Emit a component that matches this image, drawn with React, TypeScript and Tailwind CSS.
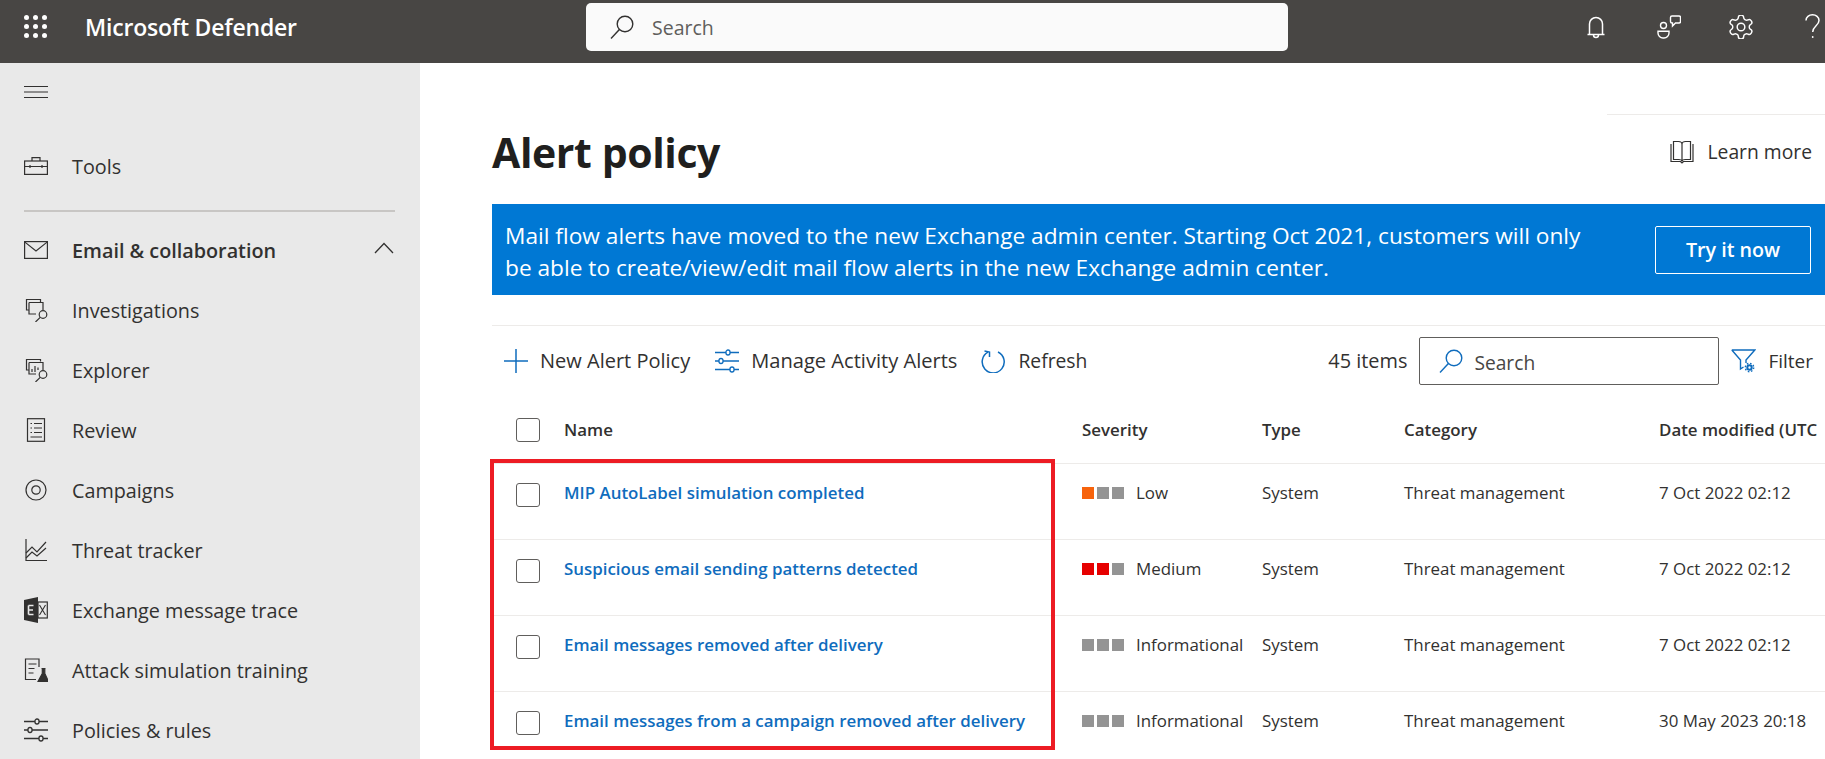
import React from "react";

const S = ({ w = 24, h = 24, vb = "0 0 24 24", c = "#323130", sw = 1.2, children }: { w?: number; h?: number; vb?: string; c?: string; sw?: number; children: React.ReactNode }) => (
  <svg width={w} height={h} viewBox={vb} fill="none" stroke={c} strokeWidth={sw} className="shrink-0 block">
    {children}
  </svg>
);

const Mag = ({ c, sw = 1.4 }: { c: string; sw?: number }) => (
  <S c={c} sw={sw}>
    <circle cx="15" cy="9" r="7.8" />
    <path d="M9.4 14.6 1 23.4" />
  </S>
);

const Sliders = ({ c }: { c: string }) => (
  <S c={c} sw={1.3}>
    <path d="M0 3.5h11M15 3.5h9M0 12h4M8 12h16M0 20.5h15M19 20.5h5" />
    <rect x="11" y="1" width="4" height="5" rx="2" />
    <rect x="4" y="9.5" width="4" height="5" rx="2" />
    <rect x="15" y="18" width="4" height="5" rx="2" />
  </S>
);

const nav: { label: string; icon: React.ReactNode; bold?: boolean }[] = [
  {
    label: "Investigations",
    icon: (
      <S>
        <path d="M16.5 4V1.5H2.5V12H5" />
        <path d="M5 4.5H19V12M5 4.5V16H12" />
        <circle cx="19" cy="16.5" r="3.8" />
        <path d="M16.2 19.3 11.5 24" />
      </S>
    ),
  },
  {
    label: "Explorer",
    icon: (
      <S>
        <path d="M16.5 3.5V1.5H2.5V12H5" />
        <path d="M5 4.5H19V12M5 4.5V16H12" />
        <path d="M8 14V11M11 14V8M14 12V9.5" />
        <circle cx="19" cy="16.5" r="3.8" />
        <path d="M16.2 19.3 11.5 24" />
      </S>
    ),
  },
  {
    label: "Review",
    icon: (
      <S>
        <rect x="3.5" y="0.7" width="17" height="22.6" />
        <path d="M6.5 5.5h1.5M10 5.5h8M6.5 10h1.5M10 10h8M6.5 14.5h1.5M10 14.5h8M6.5 19h11.5" />
      </S>
    ),
  },
  {
    label: "Campaigns",
    icon: (
      <S>
        <circle cx="12" cy="12" r="10" />
        <circle cx="12" cy="12" r="4.2" />
      </S>
    ),
  },
  {
    label: "Threat tracker",
    icon: (
      <S>
        <path d="M2 1v21.5h21" />
        <path d="M2 15l6-6 5 5 9-10" />
        <path d="M2 20l6-6 5 4 9-8" />
      </S>
    ),
  },
  {
    label: "Exchange message trace",
    icon: (
      <svg width="24" height="26" viewBox="0 0 24 26" className="shrink-0 block">
        <path d="M0 3 14 0v26L0 23z" fill="#323130" />
        <path d="M4.5 8.5h5M4.5 13h4.5M4.5 17.5h5M4.5 8.5v9" stroke="#e9e9e9" strokeWidth="1.6" fill="none" />
        <rect x="14" y="5" width="9.3" height="16" fill="none" stroke="#323130" strokeWidth="1.2" />
        <path d="M15.5 8l6 10M21.5 8l-6 10" stroke="#323130" strokeWidth="1.1" fill="none" />
      </svg>
    ),
  },
  {
    label: "Attack simulation training",
    icon: (
      <S>
        <path d="M12 21.5H1.5V1H15v8" />
        <path d="M4.5 6h8M4.5 10.5h6M4.5 15h5" />
        <path d="M17.5 10.5h4M18.3 10.5v5L14 23.5h10.5l-3.7-8v-5z" fill="#323130" />
      </S>
    ),
  },
  { label: "Policies & rules", icon: <Sliders c="#323130" /> },
];

const sq: Record<string, string[]> = {
  Low: ["#f7630c", "#949494", "#949494"],
  Medium: ["#e60000", "#e60000", "#949494"],
  Informational: ["#949494", "#949494", "#949494"],
};

const rows = [
  ["MIP AutoLabel simulation completed", "Low", "7 Oct 2022 02:12"],
  ["Suspicious email sending patterns detected", "Medium", "7 Oct 2022 02:12"],
  ["Email messages removed after delivery", "Informational", "7 Oct 2022 02:12"],
  ["Email messages from a campaign removed after delivery", "Informational", "30 May 2023 20:18"],
];

const Box = () => <div className="w-[24px] h-[24px] border border-[#605e5c] rounded-[3px] bg-white" />;

export default function App() {
  return (
    <div className="w-[1825px] h-[759px] overflow-hidden flex flex-col bg-white text-[#323130] font-['Open_Sans','Noto_Sans',sans-serif]">
      <header className="h-[63px] pb-[10px] shrink-0 bg-[#484644] flex items-center text-white">
        <div className="ml-[24px] w-[23px]">
          <svg width="23" height="23" viewBox="0 0 23 23" fill="white" className="block">
            {[2.5, 11.5, 20.5].flatMap((y) =>
              [2.5, 11.5, 20.5].map((x) => <circle key={`${x}-${y}`} cx={x} cy={y} r="2.5" />)
            )}
          </svg>
        </div>
        <div className="ml-[38px] w-[211px] mt-[2px] text-[23px] font-semibold tracking-[-0.2px] whitespace-nowrap">Microsoft Defender</div>
        <div className="ml-[290px] w-[702px] h-[48px] bg-[#fafafa] rounded-[5px] flex items-center text-[#605e5c]">
          <div className="ml-[24px]">
            <Mag c="#323130" />
          </div>
          <span className="ml-[18px] mt-[3px] text-[19.5px]">Search</span>
        </div>
        <div className="ml-[299px]">
          <svg width="18" height="24" viewBox="0 0 18 24" fill="none" stroke="white" strokeWidth="1.5" className="block">
            <path d="M.5 19.5h17M2.5 19.5V9a6.5 6.5 0 0 1 13 0v10.5M6.5 20a2.5 2.5 0 0 0 5 0" />
          </svg>
        </div>
        <div className="ml-[52px]">
          <svg width="24" height="24" viewBox="0 0 24 24" fill="none" stroke="white" strokeWidth="1.4" className="block">
            <circle cx="6.5" cy="10.5" r="3" />
            <path d="M1 16.2h11v1.8a5 5 0 0 1-5 5H6a5 5 0 0 1-5-5z" />
            <path d="M15 1h7a1.5 1.5 0 0 1 1.5 1.5v4A1.5 1.5 0 0 1 22 8h-3.5L15.5 11V8H15a1.5 1.5 0 0 1-1.5-1.5v-4A1.5 1.5 0 0 1 15 1z" />
          </svg>
        </div>
        <div className="ml-[48px]">
          <svg width="24" height="24" viewBox="2 2 20 20" fill="none" stroke="white" strokeWidth="1.2" className="block">
            <path d="M12.22 2h-.44a2 2 0 0 0-2 2v.18a2 2 0 0 1-1 1.73l-.43.25a2 2 0 0 1-2 0l-.15-.08a2 2 0 0 0-2.73.73l-.22.38a2 2 0 0 0 .73 2.73l.15.1a2 2 0 0 1 1 1.72v.51a2 2 0 0 1-1 1.74l-.15.09a2 2 0 0 0-.73 2.73l.22.38a2 2 0 0 0 2.73.73l.15-.08a2 2 0 0 1 2 0l.43.25a2 2 0 0 1 1 1.73V20a2 2 0 0 0 2 2h.44a2 2 0 0 0 2-2v-.18a2 2 0 0 1 1-1.73l.43-.25a2 2 0 0 1 2 0l.15.08a2 2 0 0 0 2.73-.73l.22-.39a2 2 0 0 0-.73-2.73l-.15-.08a2 2 0 0 1-1-1.74v-.5a2 2 0 0 1 1-1.74l.15-.09a2 2 0 0 0 .73-2.73l-.22-.38a2 2 0 0 0-2.73-.73l-.15.08a2 2 0 0 1-2 0l-.43-.25a2 2 0 0 1-1-1.73V4a2 2 0 0 0-2-2z" />
            <circle cx="12" cy="12" r="3.2" />
          </svg>
        </div>
        <div className="ml-[52px]">
          <svg width="15" height="25" viewBox="0 0 15 25" fill="none" stroke="white" strokeWidth="1.5" className="block">
            <path d="M1 6.5C1 3 4 .8 7.5.8S14 3.2 14 6.5c0 5-6.3 5.5-6.3 11.5" />
            <circle cx="7.7" cy="23" r="0.9" fill="white" stroke="none" />
          </svg>
        </div>
      </header>
      <div className="flex-1 flex min-h-0">
        <aside className="w-[420px] shrink-0 bg-[#e9e9e9] flex flex-col text-[19.8px] overflow-hidden">
          <div className="h-[58px] shrink-0 flex items-center pl-[24px]">
            <svg width="24" height="12" viewBox="0 0 24 12" stroke="#323130" strokeWidth="1" className="block">
              <path d="M0 .5h24M0 6h24M0 11.5h24" />
            </svg>
          </div>
          <div className="h-[60px] mt-[15px] shrink-0 flex items-center pl-[24px] gap-[24px]">
            <S h={18} vb="0 0 24 18">
              <rect x="0.6" y="4" width="22.8" height="13.4" />
              <path d="M8 4V.7h8V4M.6 9.5h22.8M6 8v3M18 8v3" />
            </S>
            <span className="mt-[2px]">Tools</span>
          </div>
          <div className="mt-[14px] mx-[24px] w-[371px] h-[2px] shrink-0 bg-[#c8c6c4]" />
          <div className="h-[60px] mt-[8px] shrink-0 flex items-center pl-[24px] gap-[24px] font-semibold">
            <S h={18} vb="0 0 24 18">
              <rect x="0.6" y="0.6" width="22.8" height="16.8" />
              <path d="M.6.9 12 10 23.4.9" />
            </S>
            <span className="mt-[2px]">Email &amp; collaboration</span>
            <div className="ml-auto mr-[26px] mb-[4px]">
              <S w={20} h={12} vb="0 0 20 12" sw={1.3}>
                <path d="M1 11 10 1.5 19 11" />
              </S>
            </div>
          </div>
          <div className="flex flex-col">
            {nav.map((n) => (
              <div key={n.label} className="h-[60px] shrink-0 flex items-center pl-[24px] gap-[24px]">
                {n.icon}
                <span className="mt-[2px]">{n.label}</span>
              </div>
            ))}
          </div>
        </aside>
        <main className="flex-1 min-w-0 flex flex-col pl-[72px] relative overflow-hidden">
          <div className="mt-[51px] self-end w-[218px] h-px shrink-0 bg-[#edebe9]" />
          <div className="mt-[9px] mb-[24px] h-[56px] shrink-0 flex items-center justify-between pr-[13px]">
            <h1 className="text-[41px] font-bold text-[#201f1e] tracking-[-0.4px] leading-[56px]">Alert policy</h1>
            <div className="flex items-center gap-[14px] text-[19.3px]">
              <S>
                <path d="M1 4v17.5h9.5L12 23l1.5-1.5H23V4" />
                <path d="M3.5 19.5V1.5h5c2 0 3.5 1 3.5 3 0-2 1.5-3 3.5-3h5v18h-5c-2 0-3.5.7-3.5 2 0-1.3-1.5-2-3.5-2zM12 4.5v17" />
              </S>
              <span className="mt-[1px]">Learn more</span>
            </div>
          </div>
          <div className="h-[91px] shrink-0 bg-[#0078d4] text-white flex items-center justify-between pl-[14px] pr-[14px]">
            <p className="text-[22.7px] leading-[32px] mt-[4px] -ml-px whitespace-nowrap">
              Mail flow alerts have moved to the new Exchange admin center. Starting Oct 2021, customers will only
              <br />
              be able to create/view/edit mail flow alerts in the new Exchange admin center.
            </p>
            <div className="w-[156px] h-[48px] pt-[1px] border border-white rounded-[2px] flex items-center justify-center text-[19.7px] font-semibold">Try it now</div>
          </div>
          <div className="mt-[30px] h-px shrink-0 bg-[#edebe9]" />
          <div className="h-[70px] shrink-0 flex items-center text-[20px] pl-[12px]">
            <S c="#0f6cbd" sw={1.5}>
              <path d="M12 0v24M0 12h24" />
            </S>
            <span className="ml-[12px]">New Alert Policy</span>
            <div className="ml-[25px]">
              <Sliders c="#0f6cbd" />
            </div>
            <span className="ml-[12px] text-[20.1px]">Manage Activity Alerts</span>
            <div className="ml-[24px]">
              <S c="#0f6cbd" sw={1.5}>
                <path d="M7 3.2A11 11 0 1 0 17 3" />
                <path d="M8.5 8V3L3.5 2" />
              </S>
            </div>
            <span className="ml-[13px] text-[19.3px]">Refresh</span>
            <span className="ml-auto text-[19.9px]">45 items</span>
            <div className="ml-[12px] w-[300px] h-[48px] border border-[#605e5c] rounded-[2px] flex items-center">
              <div className="ml-[19px]">
                <Mag c="#0f6cbd" />
              </div>
              <span className="ml-[11px] mt-[4px] text-[19.2px] text-[#484644]">Search</span>
            </div>
            <div className="ml-[12px]">
              <svg width="25" height="24" viewBox="0 0 25 24" fill="none" stroke="#0f6cbd" strokeWidth="1.4" className="block">
                <path d="M.8 1h23L15 11v3M.8 1l8.7 10v9l3-2" />
                <circle cx="18.5" cy="18.5" r="2.2" strokeWidth="2" />
                <circle cx="18.5" cy="18.5" r="4.2" strokeWidth="1.4" strokeDasharray="1.6 1.7" />
              </svg>
            </div>
            <span className="ml-[12px] mr-[12px] text-[19px]">Filter</span>
          </div>
          <div className="h-[68px] shrink-0 grid grid-cols-[72px_518px_180px_142px_255px_1fr] items-center border-b border-[#edebe9] text-[16.9px] font-semibold whitespace-nowrap">
            <div className="pl-[24px]">
              <Box />
            </div>
            <div>Name</div>
            <div>Severity</div>
            <div>Type</div>
            <div>Category</div>
            <div>Date modified (UTC</div>
          </div>
          {rows.map(([name, sev, date]) => (
            <div key={name} className="h-[76px] shrink-0 grid grid-cols-[72px_518px_180px_142px_255px_1fr] items-start border-b border-[#edebe9] text-[16.9px] whitespace-nowrap">
              <div className="pl-[24px] pt-[19px]">
                <Box />
              </div>
              <div className="pt-[17px] leading-[24px] font-semibold text-[#0f6cbd]">{name}</div>
              <div className="pt-[17px] leading-[24px] flex items-center">
                <div className="flex gap-[3px]">
                  {sq[sev].map((c, i) => (
                    <div key={i} className="w-[12px] h-[12px]" style={{ backgroundColor: c }} />
                  ))}
                </div>
                <span className="ml-[12px]">{sev}</span>
              </div>
              <div className="pt-[17px] leading-[24px]">System</div>
              <div className="pt-[17px] leading-[24px]">Threat management</div>
              <div className="pt-[17px] leading-[24px]">{date}</div>
            </div>
          ))}
          <div className="absolute left-[70px] top-[396px] w-[565px] h-[291px] border-[4px] border-[#ed1c24] pointer-events-none" />
        </main>
      </div>
    </div>
  );
}
